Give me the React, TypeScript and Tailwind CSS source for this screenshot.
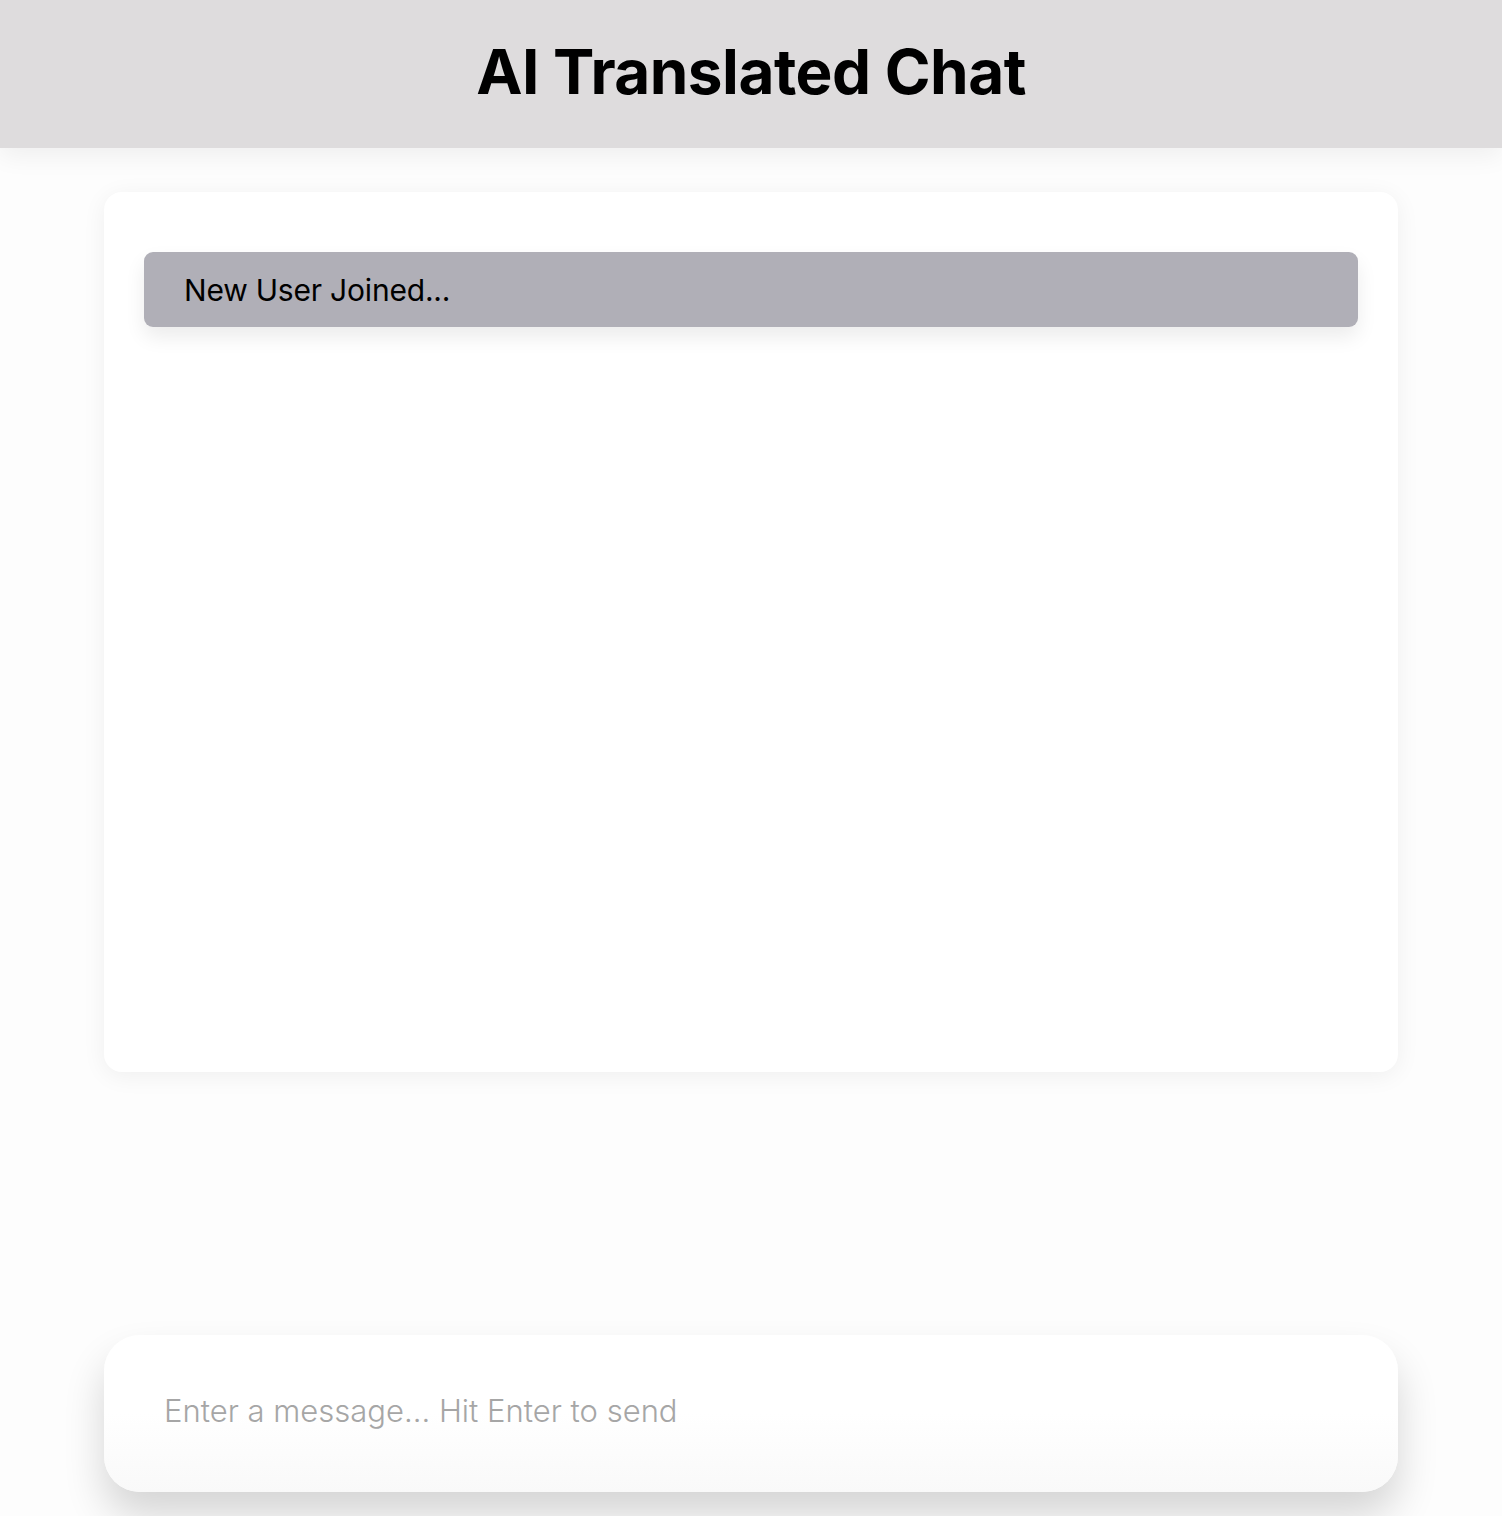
import React from "react";

export default function App() {
  return (
    <div
      className="min-h-[1516px] w-full bg-[#fdfdfd] flex flex-col"
      style={{ fontFamily: "Inter, 'Noto Sans', sans-serif" }}
    >
      <header className="h-[148px] bg-[#dedcdd] flex items-center justify-center shadow-[0_8px_24px_rgba(0,0,0,0.06)] relative z-10">
        <h1 className="text-[62px] font-bold text-black tracking-[-0.5px] leading-none -mt-[4px]">
          AI Translated Chat
        </h1>
      </header>
      <main className="flex-1 flex flex-col items-center px-[104px]">
        <section className="mt-[44px] w-full h-[880px] bg-white rounded-[18px] shadow-[0_4px_24px_rgba(0,0,0,0.06)] px-[40px] pt-[60px]">
          <div className="h-[75px] bg-[#b0afb7] rounded-[9px] flex items-center px-[40px] shadow-[0_10px_20px_rgba(0,0,0,0.08)]">
            <span className="text-[30px] text-black leading-none tracking-[-0.2px]">New User Joined...</span>
          </div>
        </section>
        <div className="mt-auto mb-[24px] w-full h-[157px] rounded-[36px] bg-gradient-to-b from-white via-white to-[#f9f9f9] shadow-[0_24px_40px_rgba(0,0,0,0.16)] flex items-center px-[60px]">
          <input
            className="w-full bg-transparent outline-none text-[31px] font-light text-black placeholder:text-[#a6a6a6] leading-none -mt-[6px]"
            placeholder="Enter a message... Hit Enter to send"
          />
        </div>
      </main>
    </div>
  );
}
